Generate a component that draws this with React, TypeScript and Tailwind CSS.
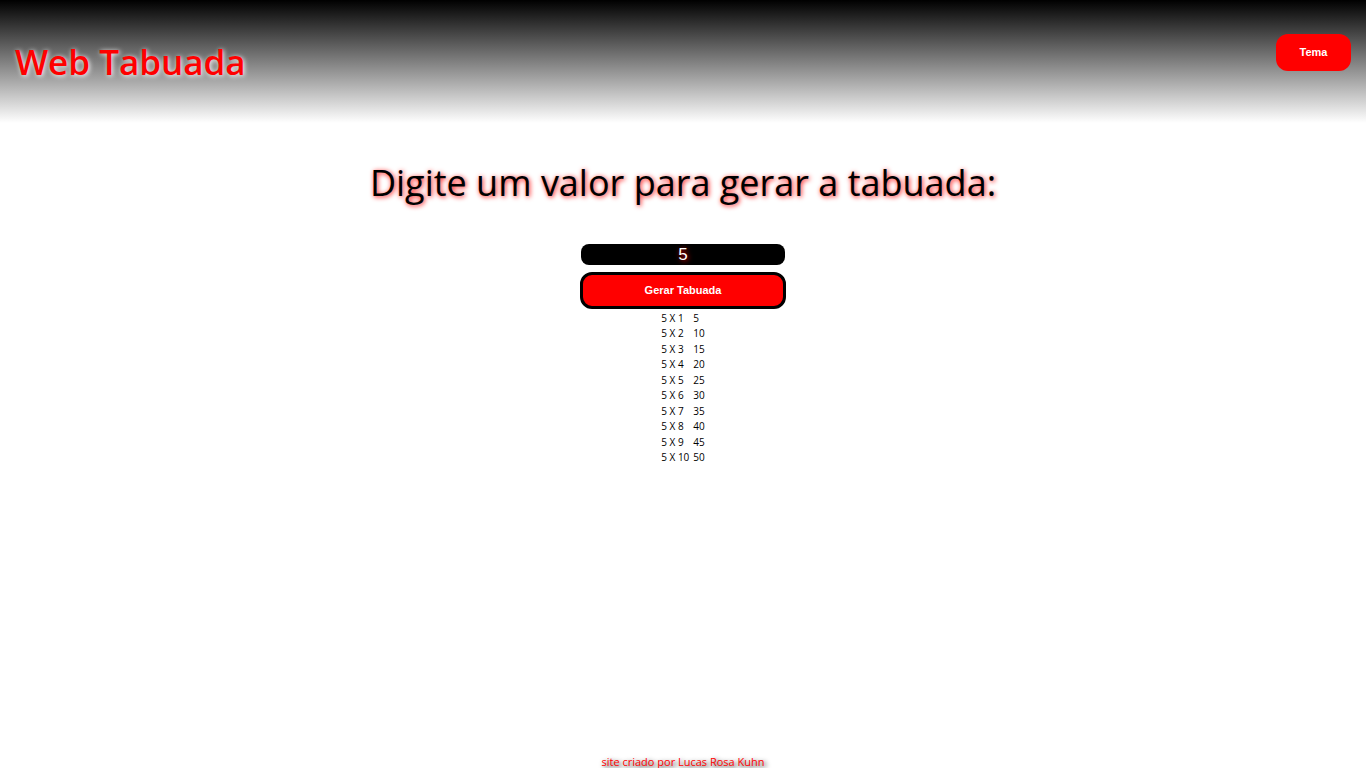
import { useState } from "react";

const FACTORS = [1, 2, 3, 4, 5, 6, 7, 8, 9, 10];

export default function App() {
  const [value, setValue] = useState("5");
  const [base, setBase] = useState(5);
  const [dark, setDark] = useState(false);

  return (
    <div
      className={`flex min-h-screen flex-col font-['Trebuchet_MS','Open_Sans',sans-serif] ${
        dark ? "bg-neutral-900 text-white" : "bg-white text-black"
      }`}
    >
      <header className="flex h-[123px] items-center justify-between bg-linear-to-b/srgb from-black to-white px-[15px]">
        <h1 className="text-[35px] leading-[46px] font-semibold text-[#ff0000] [text-shadow:1px_1px_5px_#fff]">
          Web Tabuada
        </h1>
        <button
          type="button"
          onClick={() => setDark(!dark)}
          className="mb-[18px] h-[37px] w-[75px] rounded-xl bg-[#ff0000] font-['Liberation_Sans',Arial,sans-serif] text-[11px] font-bold text-white"
        >
          Tema
        </button>
      </header>

      <main className="flex flex-1 flex-col items-center pt-[37px]">
        <label
          htmlFor="valor"
          className="text-center text-[36px] leading-[46px] [text-shadow:1px_1px_5px_#ff0000]"
        >
          Digite um valor para gerar a tabuada:
        </label>
        <form
          className="mt-[38px] flex flex-col items-center gap-[7px] font-['Liberation_Sans',Arial,sans-serif]"
          onSubmit={(event) => {
            event.preventDefault();
            setBase(Number(value));
          }}
        >
          <input
            id="valor"
            type="text"
            inputMode="numeric"
            value={value}
            onChange={(event) => setValue(event.target.value)}
            className="h-[21px] w-[204px] rounded-lg bg-black text-center text-[17px] leading-[21px] text-white [text-shadow:1px_1px_5px_#ff0000]"
          />
          <button
            type="submit"
            className="h-[37px] w-[206px] rounded-xl border-3 border-black bg-[#ff0000] text-[11px] font-bold text-white"
          >
            Gerar Tabuada
          </button>
        </form>
        <table className="mt-px h-[155px] text-[10px] leading-[14px]">
          <tbody>
            {FACTORS.map((factor) => (
              <tr key={factor}>
                <td className="pr-1">
                  {base} X {factor}
                </td>
                <td>{base * factor}</td>
              </tr>
            ))}
          </tbody>
        </table>
      </main>

      <footer className="text-center text-[11px] leading-[13px] text-[#ff0000] [text-shadow:2px_2px_5px_#000]">
        site criado por Lucas Rosa Kuhn
      </footer>
    </div>
  );
}
